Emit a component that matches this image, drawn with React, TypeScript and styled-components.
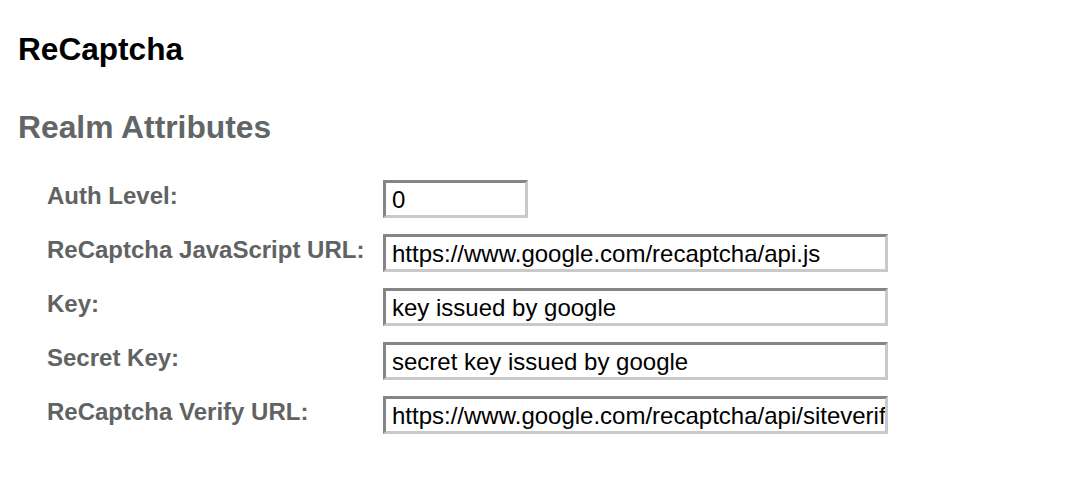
import React, { FC } from "react";
import styled, { createGlobalStyle } from "styled-components";

const GlobalStyle = createGlobalStyle`
  html, body {
    margin: 0;
    padding: 0;
    background: #ffffff;
  }

  body {
    font-family: "Liberation Sans", Arial, Helvetica, sans-serif;
  }
`;

const Page = styled.div`
  padding: 31px 18px 0 18px;
`;

const Title = styled.h1`
  margin: 0;
  font-size: 31.6px;
  font-weight: bold;
  color: #000000;
  line-height: 36px;
`;

const SectionTitle = styled.h2`
  margin: 42px 0 0 0;
  font-size: 31.8px;
  font-weight: bold;
  color: #636666;
  line-height: 36px;
`;

const Form = styled.div`
  display: grid;
  grid-template-columns: 336px 1fr;
  row-gap: 16px;
  margin: 35px 0 0 29px;
`;

const Label = styled.label`
  padding-top: 2px;
  font-size: 24px;
  font-weight: bold;
  line-height: 28px;
  color: #5f6363;
  white-space: nowrap;
`;

const Field = styled.input<{ $width: number }>`
  box-sizing: border-box;
  width: ${(p) => p.$width}px;
  height: 38px;
  margin: 0;
  padding: 1px 0 0 6px;
  border-style: solid;
  border-width: 3px;
  border-color: #858585 #c9c9c9 #c9c9c9 #858585;
  background: #ffffff;
  font-family: "Liberation Sans", Arial, Helvetica, sans-serif;
  font-size: 24px;
  color: #000000;
  outline: none;
`;

interface Attribute {
  label: string;
  value: string;
  width: number;
}

const attributes: Array<Attribute> = [
  { label: "Auth Level:", value: "0", width: 145 },
  {
    label: "ReCaptcha JavaScript URL:",
    value: "https://www.google.com/recaptcha/api.js",
    width: 505,
  },
  { label: "Key:", value: "key issued by google", width: 505 },
  { label: "Secret Key:", value: "secret key issued by google", width: 505 },
  {
    label: "ReCaptcha Verify URL:",
    value: "https://www.google.com/recaptcha/api/siteverify",
    width: 505,
  },
];

const App: FC = () => {
  return (
    <>
      <GlobalStyle />
      <Page>
        <Title>ReCaptcha</Title>
        <SectionTitle>Realm Attributes</SectionTitle>
        <Form>
          {attributes.map((attr) => (
            <React.Fragment key={attr.label}>
              <Label>{attr.label}</Label>
              <div>
                <Field $width={attr.width} defaultValue={attr.value} readOnly />
              </div>
            </React.Fragment>
          ))}
        </Form>
      </Page>
    </>
  );
};

export default App;
